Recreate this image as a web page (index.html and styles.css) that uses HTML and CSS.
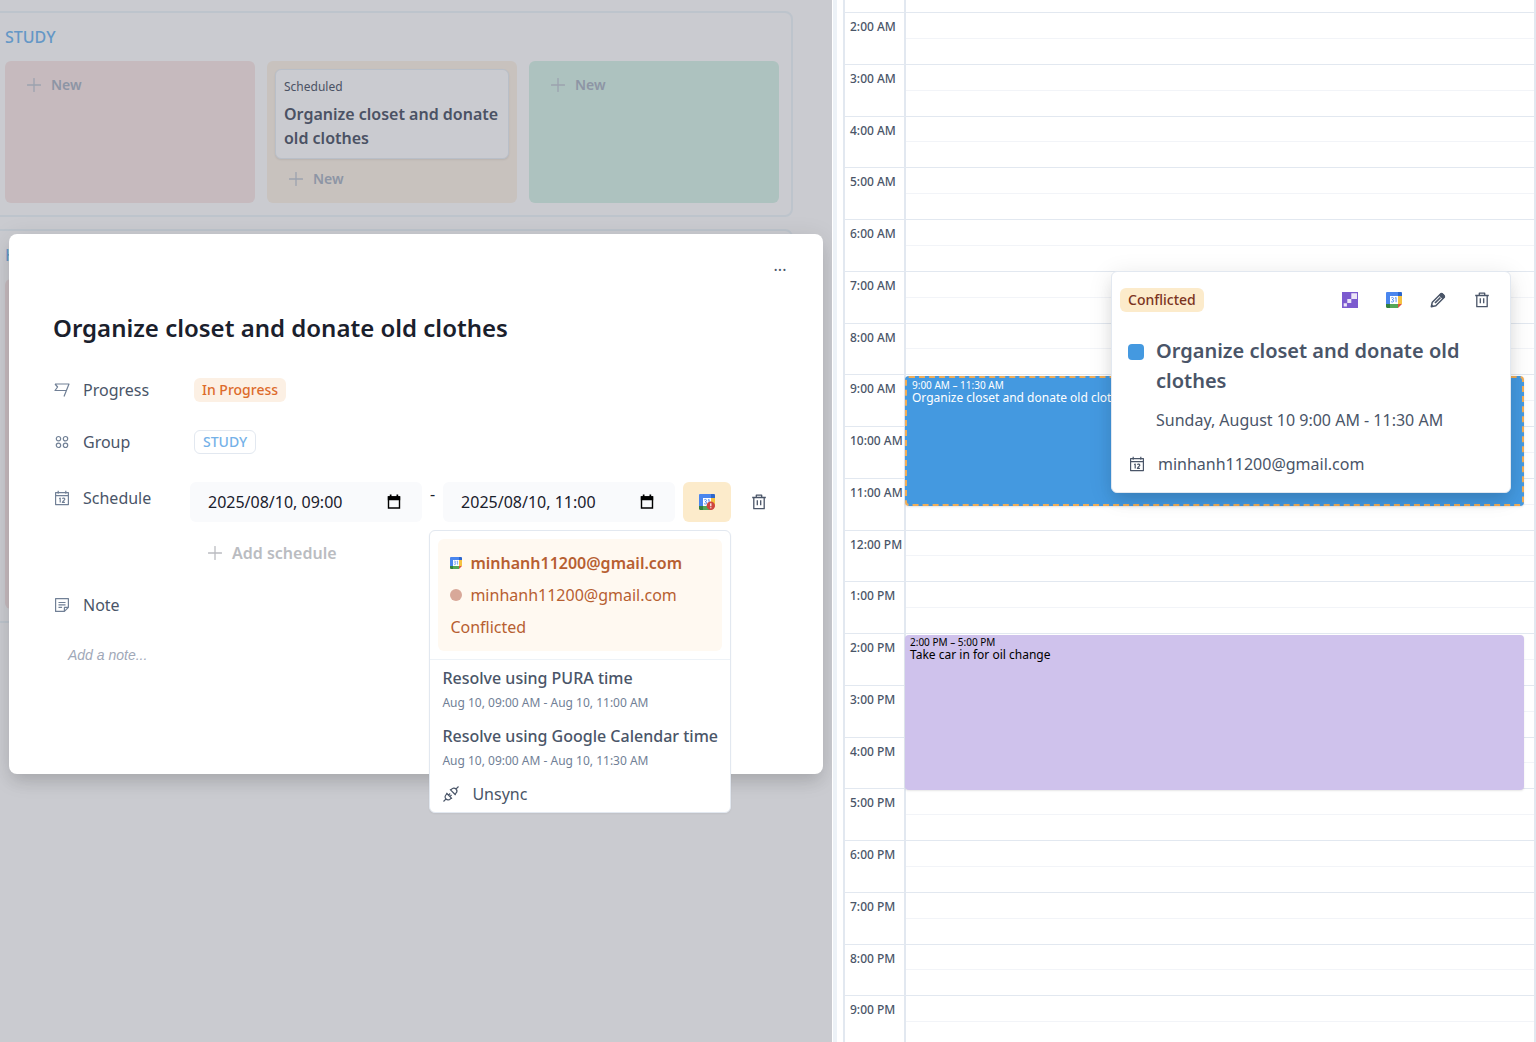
FILE: index.html
```html
<!DOCTYPE html>
<html lang="en">
<head>
<meta charset="utf-8">
<title>Planner</title>
<link rel="stylesheet" href="styles.css">
</head>
<body>
<svg class="sprite" aria-hidden="true">
  <defs>
    <symbol id="plus" viewBox="0 0 14 14"><path d="M7 .5v13M.5 7h13" fill="none" stroke="currentColor" stroke-width="1.3" stroke-linecap="round"/></symbol>
    <symbol id="flag" viewBox="0 0 16 16"><path d="M1 2h14l-5 12.500M1 2l2.600 3L1 8.500h11.500" fill="none" stroke="currentColor" stroke-width="1.200" stroke-linejoin="round"/></symbol>
    <symbol id="group" viewBox="0 0 16 16"><g fill="none" stroke="currentColor" stroke-width="1.200"><circle cx="4.500" cy="4.700" r="2.200"/><circle cx="11.500" cy="4.700" r="2.200"/><circle cx="4.500" cy="11.300" r="2.200"/><circle cx="11.500" cy="11.300" r="2.200"/></g></symbol>
    <symbol id="calendar" viewBox="0 0 16 16"><path d="M1.600 2.600h12.800v12H1.600zM1.600 5.700h12.800M4.200.8v3M11.800.8v3M5.200 8.700l1-.6v4.300M8.300 8.700c.6-.9 2.500-.7 2.500.5 0 1-1.600 1.300-2.400 3.200h2.500" fill="none" stroke="currentColor" stroke-width="1.200" stroke-linejoin="round"/></symbol>
    <symbol id="note" viewBox="0 0 16 16"><path d="M1.600 1.600h12.800v8.800l-4 4H1.600zM14.400 10.400h-4v4M4.500 5.500h7M4.500 7.900h7M4.500 10.300h3.600" fill="none" stroke="currentColor" stroke-width="1.200" stroke-linejoin="round"/></symbol>
    <symbol id="trash" viewBox="0 0 16 16"><path d="M1.200 3.500h13.600M5.300 3.300V1.200h5.400v2.100M2.800 3.700v11h10.400v-11" fill="none" stroke="currentColor" stroke-width="1.300" stroke-linejoin="round"/><path d="M6.300 6.300v5M9.700 6.300v5" stroke="currentColor" stroke-width="1.300"/></symbol>
    <symbol id="pencil" viewBox="0 0 16 16"><path d="M1.300 14.700l1-4.500 8.500-8.500c.8-.8 4.300 2.600 3.500 3.500l-8.500 8.500z" fill="none" stroke="currentColor" stroke-width="1.500" stroke-linejoin="round"/><path d="M8.700 3.300l2.200-2.100c1.600-1 4.700 2.200 3.900 3.900l-2.100 2.200zM1.300 14.700l.5-2.400 1.900 1.900z" fill="currentColor"/><path d="M10.500 5.500l-5.500 5.500" stroke="currentColor" stroke-width="1.700"/></symbol>
    <symbol id="unplug" viewBox="0 0 16 16"><path d="M.5 15.500l2.600-2.600M3 13c-1.500-1.500-1-3.200.2-4.400l.9-.9 4.200 4.200-.9.900C6.200 14 4.500 14.500 3 13zM3.300 7l5.700 5.700M5.500 9.200l1.700-1.700M6.900 10.600l1.700-1.700M15.500.5l-2.600 2.600M13 3c1.500 1.500 1 3.200-.2 4.400l-.9.900-4.200-4.200.9-.9C9.800 2 11.500 1.500 13 3zM7 3.300L12.700 9" fill="none" stroke="currentColor" stroke-width="1.200"/></symbol>
    <symbol id="gcal" viewBox="0 0 16 16"><path d="M1.200 0H12v4H4v8H0V1.200C0 .5.500 0 1.200 0z" fill="#4a86ee"/><path d="M12 0h2.800c.7 0 1.200.5 1.200 1.200V4h-4z" fill="#2c66cc"/><path d="M12 4h4v8h-4z" fill="#f5c242"/><path d="M4 12h8v4H4z" fill="#54a657"/><path d="M0 12h4v4H1.200C.5 16 0 15.500 0 14.800z" fill="#33803f"/><path d="M12 12h4l-4 4z" fill="#dd5140"/><path d="M4 4h8v8H4z" fill="#fff"/><path d="M5.200 6c.7-.9 2.400-.7 2.300.5 0 .8-.7 1.200-1.400 1.200.8 0 1.700.4 1.600 1.300-.1 1.400-2.100 1.400-2.700.3M8.900 6.200l1.200-.7v4.700" fill="none" stroke="#4a86ee" stroke-width=".9"/></symbol>
    <symbol id="pura" viewBox="0 0 16 16"><path d="M0 0h16v16H0z" fill="#7c5bcf"/><path d="M9.300 1.300H15V7H9.300zM5.300 7h4v4h-4zM1.700 11.300h3.200v3.200H1.700z" fill="#ece6f7"/></symbol>
    <symbol id="picker" viewBox="0 0 14 16"><path d="M1.500 3h11v11h-11z" fill="none" stroke="currentColor" stroke-width="1.400"/><path d="M.8 2.300h12.400v3.900H.8zM2.800.6h1.700v2.400H2.800zM9.500.6h1.700v2.400H9.500z" fill="currentColor"/></symbol>
  </defs>
</svg>

<div class="app">
  <main class="board">
    <section class="group">
      <h2 class="group-title">STUDY</h2>
      <div class="columns">
        <div class="column todo"><button class="new"><svg class="icon-plus"><use href="#plus"/></svg>New</button></div>
        <div class="column doing">
          <article class="card">
            <p class="card-status">Scheduled</p>
            <h3 class="card-title">Organize closet and donate old clothes</h3>
          </article>
          <button class="new"><svg class="icon-plus"><use href="#plus"/></svg>New</button>
        </div>
        <div class="column done"><button class="new"><svg class="icon-plus"><use href="#plus"/></svg>New</button></div>
      </div>
    </section>
    <section class="group">
      <h2 class="group-title">H</h2>
      <div class="columns tall">
        <div class="column todo"></div>
        <div class="column doing"></div>
        <div class="column done"></div>
      </div>
    </section>

    <div class="overlay">
      <div class="modal" role="dialog" aria-labelledby="task-title">
        <div class="modal-bar"><button class="more" aria-label="More">...</button></div>
        <h1 class="task-title" id="task-title">Organize closet and donate old clothes</h1>
        <div class="field">
          <span class="label"><svg class="icon"><use href="#flag"/></svg>Progress</span>
          <div class="value"><span class="badge progress">In Progress</span></div>
        </div>
        <div class="field">
          <span class="label"><svg class="icon"><use href="#group"/></svg>Group</span>
          <div class="value"><span class="badge study">STUDY</span></div>
        </div>
        <div class="field schedule">
          <label class="label" for="start"><svg class="icon"><use href="#calendar"/></svg>Schedule</label>
          <div class="slots">
            <div class="range">
              <div class="date">
                <input class="date-text" id="start" type="text" value="2025/08/10, 09:00">
                <button class="date-picker" aria-label="Pick start"><svg class="icon"><use href="#picker"/></svg></button>
              </div>
              <span class="dash">-</span>
              <div class="date">
                <input class="date-text" type="text" value="2025/08/10, 11:00" aria-label="End">
                <button class="date-picker" aria-label="Pick end"><svg class="icon"><use href="#picker"/></svg></button>
              </div>
              <div class="sync">
                <button class="sync-button" aria-label="Calendar sync">
                  <svg class="icon" viewBox="0 0 16 16"><use href="#gcal"/><circle cx="11.800" cy="11.800" r="4.200" fill="#cf4540"/><path d="M11.800 9.300v3M11.800 13.200v1" stroke="#fff" stroke-width="1.200"/></svg>
                </button>
                <div class="menu">
                  <div class="conflict">
                    <p class="account strong"><svg class="icon-small"><use href="#gcal"/></svg>minhanh11200@gmail.com</p>
                    <p class="account"><span class="dot"></span>minhanh11200@gmail.com</p>
                    <p class="account">Conflicted</p>
                  </div>
                  <button class="choice"><span class="choice-title">Resolve using PURA time</span><span class="choice-time">Aug 10, 09:00 AM - Aug 10, 11:00 AM</span></button>
                  <button class="choice"><span class="choice-title">Resolve using Google Calendar time</span><span class="choice-time">Aug 10, 09:00 AM - Aug 10, 11:30 AM</span></button>
                  <button class="unsync"><svg class="icon"><use href="#unplug"/></svg>Unsync</button>
                </div>
              </div>
              <button class="icon-button" aria-label="Delete schedule"><svg class="icon"><use href="#trash"/></svg></button>
            </div>
            <button class="add"><svg class="icon-plus"><use href="#plus"/></svg>Add schedule</button>
          </div>
        </div>
        <div class="field">
          <label class="label" for="note-text"><svg class="icon"><use href="#note"/></svg>Note</label>
        </div>
        <textarea class="note" id="note-text" placeholder="Add a note..."></textarea>
      </div>
    </div>
  </main>

  <div class="divider"></div>

  <aside class="calendar">
    <div class="day">
      <ol class="times">
        <li>2:00 AM</li><li>3:00 AM</li><li>4:00 AM</li><li>5:00 AM</li><li>6:00 AM</li><li>7:00 AM</li><li>8:00 AM</li><li>9:00 AM</li><li>10:00 AM</li><li>11:00 AM</li><li>12:00 PM</li><li>1:00 PM</li><li>2:00 PM</li><li>3:00 PM</li><li>4:00 PM</li><li>5:00 PM</li><li>6:00 PM</li><li>7:00 PM</li><li>8:00 PM</li><li>9:00 PM</li>
      </ol>
      <div class="track">
        <div class="hours">
          <i></i><i></i><i></i><i></i><i></i><i></i><i></i><i></i><i></i><i></i><i></i><i></i><i></i><i></i><i></i><i></i><i></i><i></i><i></i><i></i><i></i><i></i><i></i><i></i><i></i><i></i><i></i><i></i><i></i><i></i><i></i><i></i><i></i><i></i><i></i><i></i><i></i><i></i><i></i><i></i>
        </div>
        <div class="events">
          <div class="event conflicted"><span class="event-time">9:00 AM – 11:30 AM</span><span class="event-title">Organize closet and donate old clothes</span></div>
          <div class="event errand"><span class="event-time">2:00 PM – 5:00 PM</span><span class="event-title">Take car in for oil change</span></div>
        </div>
      </div>
    </div>

    <div class="popover">
      <div class="popover-bar">
        <span class="badge warning">Conflicted</span>
        <div class="actions">
          <button class="icon-button" aria-label="Open in PURA"><svg class="icon"><use href="#pura"/></svg></button>
          <button class="icon-button" aria-label="Open in Google Calendar"><svg class="icon"><use href="#gcal"/></svg></button>
          <button class="icon-button" aria-label="Edit"><svg class="icon"><use href="#pencil"/></svg></button>
          <button class="icon-button" aria-label="Delete"><svg class="icon"><use href="#trash"/></svg></button>
        </div>
      </div>
      <div class="popover-body">
        <span class="swatch"></span>
        <div class="details">
          <h2 class="popover-title">Organize closet and donate old clothes</h2>
          <p class="when">Sunday, August 10 9:00 AM - 11:30 AM</p>
        </div>
      </div>
      <p class="owner"><svg class="icon"><use href="#calendar"/></svg>minhanh11200@gmail.com</p>
    </div>
  </aside>
</div>
</body>
</html>
```
FILE: styles.css
```css
*, *::before, *::after { box-sizing: border-box; }
body { margin: 0; font: 16px/24px "Noto Sans", sans-serif; color: #4a5568; background: #fff; }
h1, h2, h3, p, ol { margin: 0; padding: 0; }
button, input, textarea { font: inherit; color: inherit; border: 0; background: none; margin: 0; }
button { display: flex; align-items: center; padding: 0; cursor: pointer; }
.sprite { position: absolute; width: 0; height: 0; }
.icon { width: 16px; height: 16px; flex: none; }
.icon-small { width: 12px; height: 12px; flex: none; }
.icon-plus { width: 14px; height: 14px; flex: none; }

.app { display: flex; height: 100vh; overflow: hidden; }

/* Board */
.board { position: relative; flex: 832 1 0; min-width: 0; overflow: hidden; background: #cacbd0; padding-top: 11px; display: flex; flex-direction: column; gap: 12px; align-items: flex-start; }
.group { flex: none; margin-left: -9px; padding: 12px; border: 2px solid #bdc4cc; border-radius: 8px; }
.group-title { font-size: 16px; line-height: 24px; font-weight: 500; color: #6497c6; margin-bottom: 12px; }
.columns { display: flex; gap: 12px; min-height: 142px; }
.columns.tall { min-height: 330px; }
.column { width: 250px; padding: 8px; border-radius: 6px; display: flex; flex-direction: column; gap: 4px; align-items: flex-start; }
.todo { background: #c6babe; }
.doing { background: #c8c2be; }
.done { background: #adc2bf; }
.new { height: 32px; padding: 0 14px; gap: 10px; font-size: 14px; font-weight: 600; color: #8d95a5; }
.new .icon-plus { color: #9ca2af; }
.card { align-self: stretch; padding: 8px; background: #cacbd0; border: 1px solid #b9bfc8; border-radius: 6px; box-shadow: 0 1px 2px rgba(0, 0, 0, .08); color: #4b5264; }
.card-status { font-size: 12px; line-height: 18px; margin-bottom: 6px; }
.card-title { font-size: 16px; line-height: 24px; font-weight: 600; }

/* Task dialog */
.overlay { position: absolute; inset: 0; padding: 234px 9px 0; }
.modal { min-height: 540px; padding: 16px 44px; background: #fff; border-radius: 8px; box-shadow: 0 10px 15px -3px rgba(0, 0, 0, .1), 0 4px 24px rgba(0, 0, 0, .1); }
.modal-bar { display: flex; justify-content: flex-end; margin-bottom: 30px; }
.more { width: 30px; height: 30px; justify-content: center; margin-right: -16px; }
.task-title { font-size: 24px; line-height: 36px; font-weight: 600; color: #1a202c; margin-bottom: 24px; }
.field { display: flex; min-height: 40px; margin-bottom: 12px; }
.label { width: 137px; height: 40px; padding-left: 1px; flex: none; display: flex; align-items: center; gap: 13px; }
.label .icon { color: #718096; }
.value { display: flex; align-items: center; padding-left: 4px; }
.badge { height: 24px; padding: 0 8px; border-radius: 6px; font-size: 14px; line-height: 24px; font-weight: 500; }
.progress { background: #fcf0e4; color: #dd6b2b; }
.study { border: 1px solid #e2e8f0; line-height: 22px; color: #74b1e8; }
.warning { background: #fcebcb; color: #7b341e; }
.schedule { margin-top: 16px; }
.slots { flex: 1; min-width: 0; padding-top: 4px; }
.range { display: flex; gap: 8px; margin-bottom: 11px; color: #1a202c; }
.date { flex: 1; min-width: 0; height: 40px; padding: 0 20px 0 18px; display: flex; align-items: center; border-radius: 6px; background: #f9fafc; }
.date-text { flex: 1; min-width: 0; width: 0; height: 40px; padding: 0; }
.date-picker { color: #000; }
.dash { line-height: 24px; }
.sync { position: relative; }
.sync-button { width: 48px; height: 40px; justify-content: center; border-radius: 6px; background: #fcebcb; }
.icon-button { width: 40px; height: 40px; justify-content: center; color: #4a5568; }
.add { height: 40px; padding: 0 18px; gap: 10px; font-weight: 600; color: #babcc1; }
.note { display: block; width: 100%; height: 80px; padding: 8px 15px; resize: none; font: italic 14px/20px "Liberation Sans", sans-serif; }
.note::placeholder { color: #a0a8b8; }

/* Sync menu */
.menu { position: absolute; z-index: 2; top: 48px; right: 0; background: #fff; border: 1px solid #e2e8f0; border-radius: 6px; white-space: nowrap; color: #4a5568; box-shadow: 0 1px 2px rgba(0, 0, 0, .05); }
.conflict { margin: 8px; padding: 12px; display: flex; flex-direction: column; gap: 8px; border-radius: 6px; background: #fff9f1; color: #b75f31; }
.account { display: flex; align-items: center; gap: 8px; }
.strong { font-weight: 600; }
.dot { width: 12px; height: 12px; border-radius: 50%; background: #d8a899; }
.choice { width: 100%; flex-direction: column; align-items: flex-start; gap: 4px; padding: 6px 12px; }
.conflict + .choice { border-top: 1px solid #edf2f7; }
.choice-title { font-weight: 500; line-height: 24px; }
.choice-time { font-size: 12px; line-height: 18px; color: #718096; }
.unsync { width: 100%; height: 36px; padding: 0 13px; gap: 13px; }

/* Calendar */
.divider { width: 5px; margin-right: 6px; flex: none; background: #edf2f7; border-left: 1px solid #fff; }
.calendar { position: relative; flex: 693 1 0; min-width: 0; overflow: hidden; }
.day { display: flex; height: 1047px; border: solid #e2e8f0; border-width: 0 2px; }
.times, .hours, .events { display: grid; grid-auto-rows: 1fr; padding-top: 12px; }
.times { width: 61px; flex: none; list-style: none; border-right: 2px solid #e2e8f0; }
.times li { padding: 5px 0 0 5px; border-top: 1px solid #e2e8f0; font-size: 12px; line-height: 18px; font-weight: 500; white-space: nowrap; }
.track { position: relative; flex: 1; min-width: 0; }
.hours { height: 100%; }
.hours i { border-top: 1px solid #e2e8f0; }
.hours i:nth-child(even) { border-top-color: #f2f4f8; }
.events { position: absolute; inset: 2px 10px -2px -1px; grid-template-rows: repeat(40, 1fr); }
.event { padding: 2px 5px; border-radius: 4px; display: flex; flex-direction: column; overflow: hidden; box-shadow: 0 1px 2px rgba(0, 0, 0, .1); }
.event-time { font-size: 10px; line-height: 11px; }
.event-title { font-size: 12px; line-height: 14px; }
.conflicted { grid-row: 15 / 20; background: #4499e0; border: 2px dashed #f0ad58; color: #fff; }
.errand { grid-row: 25 / 31; background: #cfc2ec; color: #000; }

/* Event popover */
.popover { position: absolute; top: 271px; right: 25px; width: 400px; padding: 8px; background: #fff; border: 1px solid #e2e8f0; border-radius: 6px; box-shadow: 0 10px 15px -3px rgba(0, 0, 0, .1), 0 4px 24px rgba(0, 0, 0, .1); }
.popover-bar { display: flex; align-items: center; justify-content: space-between; margin-bottom: 16px; }
.actions { display: flex; gap: 4px; }
.popover-body { display: flex; gap: 12px; padding: 0 8px; margin-bottom: 20px; }
.swatch { width: 16px; height: 16px; margin-top: 8px; flex: none; border-radius: 4px; background: #4499e0; }
.popover-title { font-size: 20px; line-height: 30px; font-weight: 600; margin-bottom: 12px; }
.owner { display: flex; align-items: center; gap: 13px; padding: 0 9px 8px; }
```
